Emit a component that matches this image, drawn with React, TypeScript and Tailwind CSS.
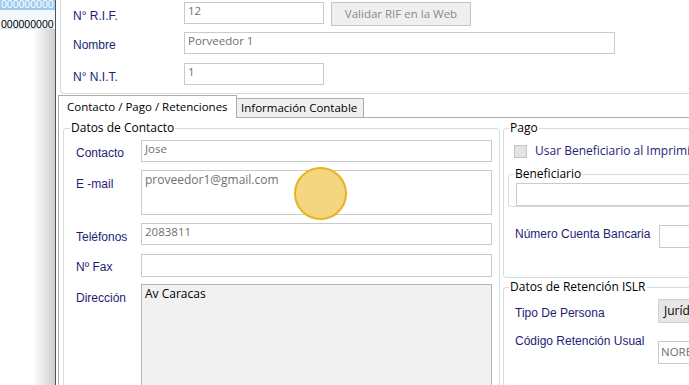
import React from 'react';

const seg = { fontFamily: '"Open Sans", "Noto Sans", sans-serif' };
const lbl = { fontFamily: '"Liberation Sans", Arial, sans-serif' };

function Field({ className = '', text = '', dark = false }: { className?: string; text?: string; dark?: boolean }) {
  return (
    <div
      style={seg}
      className={`border border-[#cacaca] bg-white px-[3px] text-[11.5px] leading-[16px] ${dark ? 'text-[#222]' : 'text-[#707070]'} ${className}`}
    >
      {text}
    </div>
  );
}

function Label({ children, className = '' }: { children: React.ReactNode; className?: string }) {
  return (
    <span style={lbl} className={`text-[12px] leading-[14px] text-[#1d1d76] whitespace-nowrap ${className}`}>
      {children}
    </span>
  );
}

export default function App() {
  return (
    <div className="relative flex h-[385px] w-[689px] overflow-hidden bg-white">
      {/* grid behind the window */}
      <aside className="flex w-[55px] flex-shrink-0 flex-col bg-gradient-to-r from-white from-60% to-[#cfcfcf]">
        <div className="flex h-[10px] items-end overflow-hidden bg-[#9dcbef] px-[1px]">
          <span style={lbl} className="text-[10.5px] leading-[12px] text-white">000000000</span>
        </div>
        <div className="h-[19px] overflow-hidden border-b border-[#d6e4f0] bg-[#f3f8fd] pl-[1px]">
          <span style={lbl} className="text-[10.5px] leading-[19px] text-black">000000000</span>
        </div>
      </aside>

      {/* window */}
      <div className="flex min-w-0 flex-1 flex-col border-l border-[#555] bg-white">
        {/* header panel */}
        <div className="ml-[4px] h-[94px] flex-shrink-0 rounded-bl-[4px] border-b border-l border-[#d9d9d9] pl-[12px]">
          <div className="mt-[2px] flex h-[24px] items-start">
            <Label className="mt-[7px] w-[111px]">N° R.I.F.</Label>
            <Field className="h-[22px] w-[140px]" text="12" />
            <button
              style={seg}
              className="ml-[7px] h-[24px] w-[140px] border border-[#c4c4c4] bg-[#efefef] text-[11.5px] text-[#8a8a8a]"
            >
              Validar RIF en la Web
            </button>
          </div>
          <div className="mt-[6px] flex h-[22px] items-start">
            <Label className="mt-[6px] w-[111px]">Nombre</Label>
            <Field className="h-[22px] w-[431px]" text="Porveedor 1" />
          </div>
          <div className="mt-[9px] flex h-[22px] items-start">
            <Label className="mt-[7px] w-[111px]">N° N.I.T.</Label>
            <Field className="h-[22px] w-[140px]" text="1" />
          </div>
        </div>

        {/* tabs */}
        <div className="ml-[2px] mt-[1px] flex items-end" style={seg}>
          <div className="relative z-10 -mb-px h-[23px] w-[179px] border border-b-0 border-[#adadad] bg-white pl-[8px] text-[11.5px] leading-[21px] text-black">
            Contacto / Pago / Retenciones
          </div>
          <div className="h-[19px] w-[127px] border border-b-0 border-l-0 border-[#adadad] bg-[#f0f0f0] pl-[4px] text-[11.5px] leading-[18px] text-black">
            Información Contable
          </div>
        </div>

        <div className="ml-[2px] flex flex-1 gap-[3px] border-l border-t border-[#adadad] pl-[4px] pt-[2px]">
          {/* Datos de Contacto */}
          <fieldset className="w-[437px] flex-shrink-0 rounded-[3px] border border-[#d6dde2] pl-[12px] pr-[7px]">
            <legend style={seg} className="ml-[-6px] px-[1px] text-[12px] leading-[16px] text-black">
              Datos de Contacto
            </legend>
            <div className="mt-[4px] flex items-start">
              <Label className="mt-[6px] w-[65px]">Contacto</Label>
              <Field className="h-[22px] flex-1" text="Jose" />
            </div>
            <div className="mt-[8px] flex items-start">
              <Label className="mt-[7px] w-[65px]">E -mail</Label>
              <Field className="h-[45px] flex-1 pt-[1px] !text-[12px]" text="proveedor1@gmail.com" />
            </div>
            <div className="mt-[8px] flex items-start">
              <Label className="mt-[7px] w-[65px]">Teléfonos</Label>
              <Field className="h-[22px] flex-1" text="2083811" />
            </div>
            <div className="mt-[9px] flex items-start">
              <Label className="mt-[6px] w-[65px]">Nº Fax</Label>
              <Field className="h-[23px] flex-1" />
            </div>
            <div className="mt-[7px] flex items-start">
              <Label className="mt-[7px] w-[65px]">Dirección</Label>
              <div
                style={seg}
                className="h-[110px] flex-1 border border-[#b5b5b5] bg-[#f1f1f1] px-[3px] pt-[1px] text-[12px] leading-[16px] text-black"
              >
                Av Caracas
              </div>
            </div>
          </fieldset>

          {/* right column */}
          <div className="flex w-[200px] flex-shrink-0 flex-col">
            <fieldset className="h-[158px] rounded-[3px] border border-[#d6dde2] pl-[4px]">
              <legend style={seg} className="ml-[1px] px-[1px] text-[12px] leading-[16px] text-black">
                Pago
              </legend>
              <div className="mt-[7px] flex items-center pl-[6px]">
                <span className="h-[13px] w-[13px] border border-[#c3c3c3] bg-[#e3e3e3]" />
                <span style={seg} className="ml-[8px] whitespace-nowrap text-[12px] leading-[16px] text-[#1d1d76]">
                  Usar Beneficiario al Imprimir
                </span>
              </div>
              <fieldset className="mt-[7px] h-[41px] rounded-[3px] border border-[#d6dde2] pl-[7px]">
                <legend style={seg} className="ml-[-2px] px-[1px] text-[12px] leading-[16px] text-black">
                  Beneficiario
                </legend>
                <Field className="mt-[1px] h-[23px] w-[200px]" />
              </fieldset>
              <div className="mt-[18px] flex items-start pl-[7px]">
                <Label className="mt-[2px] w-[144px]">Número Cuenta Bancaria</Label>
                <Field className="h-[23px] w-[40px]" />
              </div>
            </fieldset>

            <fieldset className="mt-[1px] h-[108px] rounded-[3px] border border-[#d6dde2] pl-[11px]">
              <legend style={seg} className="ml-[-6px] px-[1px] text-[12px] leading-[16px] text-black">
                Datos de Retención ISLR
              </legend>
              <div className="mt-[4px] flex items-start">
                <Label className="mt-[7px] w-[143px]">Tipo De Persona</Label>
                <div
                  style={seg}
                  className="h-[24px] w-[40px] border border-[#d0d0d0] bg-[#e6e6e6] pl-[5px] text-[12px] leading-[22px] text-black"
                >
                  Jurídica
                </div>
              </div>
              <div className="mt-[8px] flex items-start">
                <Label className="mt-[3px] w-[143px]">Código Retención Usual</Label>
                <Field className="mt-[10px] h-[23px] w-[40px] pl-[2px] pt-[2px]" text="NORE" />
              </div>
            </fieldset>
          </div>
        </div>
      </div>

      {/* click highlight */}
      <div className="absolute left-[294px] top-[167px] h-[53px] w-[53px] rounded-full border-2 border-[#e6b321] bg-[#f5d680]" />
    </div>
  );
}
